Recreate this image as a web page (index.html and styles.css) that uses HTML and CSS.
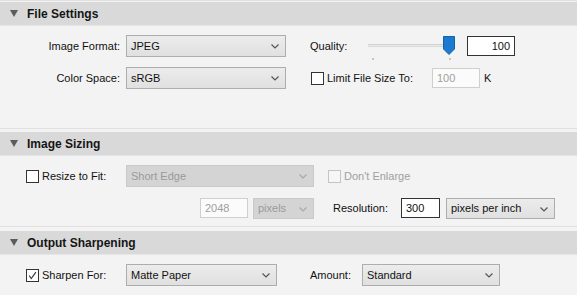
FILE: index.html
```html
<!DOCTYPE html>
<html lang="en">
<head>
    <meta charset="UTF-8">
    <title>Export Settings</title>
    <link rel="stylesheet" href="styles.css">
</head>
<body>
    <div class="panel">
        <!-- File Settings -->
        <section class="section section-file">
            <div class="section-head"><span class="twisty"></span>File Settings</div>
            <div class="section-body">
                <div class="row">
                    <span class="label label-col">Image Format:</span>
                    <div class="select format-select">JPEG<svg class="chevron" viewBox="0 0 8 5"><polyline points="0.5,0.5 4,4 7.5,0.5"/></svg></div>
                    <span class="label quality-label">Quality:</span>
                    <div class="slider">
                        <div class="track"></div>
                        <div class="tick tick-start"></div>
                        <div class="tick tick-end"></div>
                        <svg class="thumb" viewBox="0 0 12 19"><path d="M0.5 0.5 H11.5 V13 L6 18.5 L0.5 13 Z"/></svg>
                    </div>
                    <div class="field quality-field">100</div>
                </div>
                <div class="row">
                    <span class="label label-col">Color Space:</span>
                    <div class="select format-select">sRGB<svg class="chevron" viewBox="0 0 8 5"><polyline points="0.5,0.5 4,4 7.5,0.5"/></svg></div>
                    <div class="check-cell limit-cell">
                        <span class="checkbox"></span>
                        <span class="label">Limit File Size To:</span>
                    </div>
                    <div class="field field-disabled limit-field">100</div>
                    <span class="label unit">K</span>
                </div>
            </div>
        </section>

        <!-- Image Sizing -->
        <section class="section section-sizing">
            <div class="section-head"><span class="twisty"></span>Image Sizing</div>
            <div class="section-body">
                <div class="row">
                    <div class="check-cell lead-cell">
                        <span class="checkbox"></span>
                        <span class="label">Resize to Fit:</span>
                    </div>
                    <div class="select select-disabled fit-select">Short Edge<svg class="chevron" viewBox="0 0 8 5"><polyline points="0.5,0.5 4,4 7.5,0.5"/></svg></div>
                    <div class="check-cell enlarge-cell">
                        <span class="checkbox checkbox-disabled"></span>
                        <span class="label label-disabled">Don't Enlarge</span>
                    </div>
                </div>
                <div class="row">
                    <div class="field field-disabled size-field">2048</div>
                    <div class="select select-disabled unit-select">pixels<svg class="chevron" viewBox="0 0 8 5"><polyline points="0.5,0.5 4,4 7.5,0.5"/></svg></div>
                    <span class="label resolution-label">Resolution:</span>
                    <div class="field resolution-field">300</div>
                    <div class="select ppi-select">pixels per inch<svg class="chevron" viewBox="0 0 8 5"><polyline points="0.5,0.5 4,4 7.5,0.5"/></svg></div>
                </div>
            </div>
        </section>

        <!-- Output Sharpening -->
        <section class="section section-sharpen">
            <div class="section-head"><span class="twisty"></span>Output Sharpening</div>
            <div class="section-body">
                <div class="row">
                    <div class="check-cell lead-cell">
                        <span class="checkbox checked"><svg viewBox="0 0 13 13"><polyline points="2.5,6.5 5,10 10.5,2.5"/></svg></span>
                        <span class="label">Sharpen For:</span>
                    </div>
                    <div class="select paper-select">Matte Paper<svg class="chevron" viewBox="0 0 8 5"><polyline points="0.5,0.5 4,4 7.5,0.5"/></svg></div>
                    <span class="label amount-label">Amount:</span>
                    <div class="select amount-select">Standard<svg class="chevron" viewBox="0 0 8 5"><polyline points="0.5,0.5 4,4 7.5,0.5"/></svg></div>
                </div>
            </div>
        </section>
    </div>
</body>
</html>
```

FILE: styles.css
```css
* {
    margin: 0;
    padding: 0;
    box-sizing: border-box;
}

body {
    background-color: #f3f3f3;
    font-family: 'Liberation Sans', Arial, sans-serif;
    font-size: 11px;
    color: #111;
    width: 577px;
    height: 295px;
    overflow: hidden;
}

.panel {
    border-top: 1px solid #e1e1e1;
    padding-top: 1px;
}

.section {
    border-bottom: 1px solid #e0e0e0;
}

.section-sizing {
    margin-top: 3px;
}

.section-sharpen {
    margin-top: 4px;
    border-bottom: none;
}

/* Header band */
.section-head {
    height: 24px;
    background-color: #d9d9d9;
    border-bottom: 1px solid #e6e6e6;
    display: flex;
    align-items: center;
    padding-left: 10px;
    font-size: 12px;
    font-weight: bold;
    color: #151515;
}

.twisty {
    width: 0;
    height: 0;
    border-left: 4px solid transparent;
    border-right: 4px solid transparent;
    border-top: 7px solid #5c5c5c;
    margin-right: 9px;
}

.section-body {
    padding-top: 9px;
    display: flex;
    flex-direction: column;
    gap: 10px;
}

.section-file .section-body {
    height: 102px;
}

.section-sizing .section-body {
    height: 70px;
}

.row {
    display: flex;
    align-items: center;
    height: 22px;
}

.label {
    white-space: nowrap;
}

.label-disabled {
    color: #a0a0a0;
}

.label-col {
    width: 120px;
    text-align: right;
}

/* Combo boxes */
.select {
    position: relative;
    height: 22px;
    border: 1px solid #adadad;
    background: linear-gradient(#ececec, #e0e0e0);
    padding-left: 4px;
    display: flex;
    align-items: center;
    color: #111;
}

.select-disabled {
    background: #d4d4d4;
    border-color: #c9c9c9;
    color: #9a9a9a;
}

.chevron {
    position: absolute;
    right: 6px;
    top: 8px;
    width: 8px;
    height: 5px;
    fill: none;
    stroke: #555;
    stroke-width: 1.2;
}

.select-disabled .chevron {
    stroke: #a8a8a8;
}

.format-select {
    margin-left: 6px;
    width: 160px;
}

.fit-select {
    width: 188px;
}

.unit-select {
    margin-left: 5px;
    width: 61px;
    height: 21px;
}

.ppi-select {
    margin-left: 6px;
    width: 109px;
    height: 21px;
}

.paper-select {
    width: 151px;
}

.amount-select {
    width: 138px;
}

/* Text fields */
.field {
    height: 20px;
    background-color: #fff;
    border: 1px solid #333;
    display: flex;
    align-items: center;
    padding: 0 4px;
}

.field-disabled {
    border-color: #cfcfcf;
    color: #a0a0a0;
    background-color: #fbfbfb;
}

.quality-field {
    margin-left: 6px;
    width: 48px;
    justify-content: flex-end;
}

.limit-field {
    width: 48px;
}

.size-field {
    margin-left: 200px;
    width: 48px;
}

.resolution-field {
    width: 39px;
}

.unit {
    margin-left: 4px;
}

/* Quality slider */
.quality-label {
    margin-left: 24px;
    width: 58px;
}

.slider {
    position: relative;
    width: 93px;
    height: 22px;
}

.track {
    position: absolute;
    left: 0;
    top: 9px;
    width: 82px;
    height: 3px;
    border-top: 1px solid #cfcfcf;
    border-bottom: 1px solid #d8d8d8;
    background-color: #ebebeb;
}

.tick {
    position: absolute;
    top: 23px;
    width: 2px;
    height: 2px;
    background-color: #c4c4c4;
}

.tick-start {
    left: 4px;
}

.tick-end {
    left: 81px;
}

.thumb {
    position: absolute;
    left: 75px;
    top: 1px;
    width: 12px;
    height: 19px;
    fill: #1c7ad0;
    stroke: #1561a8;
    stroke-width: 1;
}

/* Check boxes */
.check-cell {
    display: flex;
    align-items: center;
    gap: 3px;
}

.checkbox {
    width: 13px;
    height: 13px;
    border: 1px solid #333;
    background-color: #fff;
    display: inline-block;
}

.checkbox-disabled {
    border-color: #c4c4c4;
    background-color: #f6f6f6;
}

.checked svg {
    display: block;
    width: 11px;
    height: 11px;
    fill: none;
    stroke: #333;
    stroke-width: 1.3;
}

.lead-cell {
    width: 126px;
    padding-left: 26px;
}

.limit-cell {
    margin-left: 25px;
    width: 121px;
}

.enlarge-cell {
    margin-left: 14px;
}

.resolution-label {
    margin-left: 19px;
    width: 68px;
}

.amount-label {
    margin-left: 33px;
    width: 52px;
}
```
